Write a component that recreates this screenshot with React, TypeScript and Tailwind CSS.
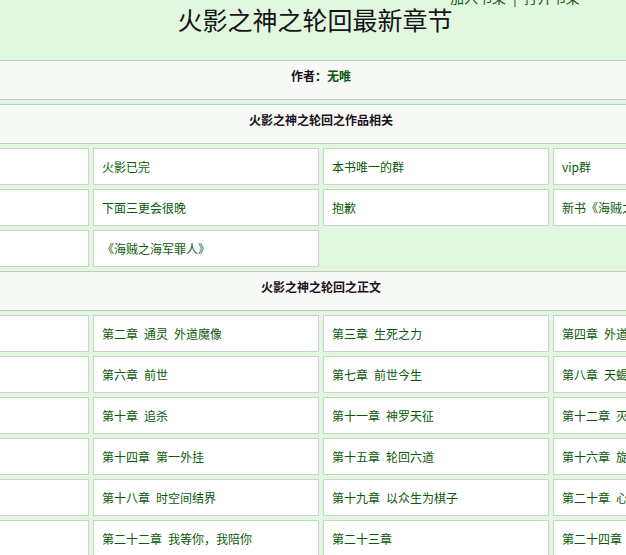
import React from "react";

const E = "\u2002";

const related: string[][] = [
  ["上架感言", "火影已完", "本书唯一的群", "vip群"],
  ["新书预告", "下面三更会很晚", "抱歉", "新书《海贼之海军罪人》"],
  ["上传说明", "《海贼之海军罪人》"],
];

const chapters: string[][] = [
  [`第一章${E}重生`, `第二章${E}通灵${E}外道魔像`, `第三章${E}生死之力`, `第四章${E}外道之力`],
  [`第五章${E}轮回`, `第六章${E}前世`, `第七章${E}前世今生`, `第八章${E}天蝎`],
  [`第九章${E}晓`, `第十章${E}追杀`, `第十一章${E}神罗天征`, `第十二章${E}灭世`],
  [`第十三章${E}佩恩`, `第十四章${E}第一外挂`, `第十五章${E}轮回六道`, `第十六章${E}旋涡`],
  [`第十七章${E}救援`, `第十八章${E}时空间结界`, `第十九章${E}以众生为棋子`, `第二十章${E}心魔`],
  [`第二十一章`, `第二十二章${E}我等你，我陪你`, `第二十三章`, `第二十四章`],
];

function Band({ children }: { children: React.ReactNode }) {
  return (
    <div className="h-[40px] bg-[#f7f9f6] border-y border-[#c3c8c3] text-center text-[12px] leading-[16px] pt-[7px] font-bold text-[#1c121c]">
      {children}
    </div>
  );
}

function Grid({ rows }: { rows: string[][] }) {
  return (
    <div className="grid grid-cols-4 gap-[4px] px-[4px]">
      {rows.flatMap((r, i) =>
        r.map((t, j) => (
          <div
            key={`${i}-${j}`}
            className="h-[37px] bg-white border border-[#cbd1cb] flex items-center pl-[8px] text-[12px] text-[#0a5a0a] whitespace-nowrap overflow-hidden"
          >
            {t}
          </div>
        ))
      )}
    </div>
  );
}

export default function App() {
  return (
    <div
      className="w-[626px] h-[555px] overflow-hidden bg-[#e2f7e0]"
      style={{ fontFamily: '"Noto Sans CJK SC", "Noto Sans", sans-serif' }}
    >
      <div className="relative h-[60px]">
        <div className="absolute left-[450px] top-[-10px] text-[14px] leading-[14px] text-[#0a5a0a] whitespace-nowrap">
          加入书架{E}|{E}打开书架
        </div>
        <h1 className="text-center text-[25px] leading-[25px] pt-[7px] pl-[4px] font-normal text-[#151515]">
          火影之神之轮回最新章节
        </h1>
      </div>
      <div className="w-[924px] ml-[-141px] flex flex-col gap-[4px]">
        <Band>
          作者：<span className="text-[#0a5a0a]">无唯</span>
        </Band>
        <Band>火影之神之轮回之作品相关</Band>
        <Grid rows={related} />
        <Band>火影之神之轮回之正文</Band>
        <Grid rows={chapters} />
      </div>
    </div>
  );
}
